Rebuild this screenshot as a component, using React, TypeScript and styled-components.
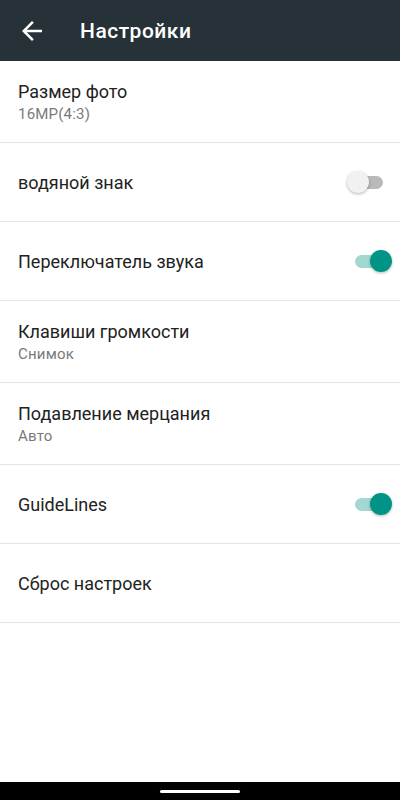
import React, { useState } from "react";
import styled, { createGlobalStyle } from "styled-components";

const GlobalStyle = createGlobalStyle`
  html, body { margin: 0; padding: 0; background: #ffffff; }
  body { font-family: Roboto, "Noto Sans", sans-serif; -webkit-font-smoothing: antialiased; }
  #root { height: 800px; }
  * { box-sizing: border-box; }
`;

const Screen = styled.div`
  width: 400px;
  height: 800px;
  display: flex;
  flex-direction: column;
  background: #ffffff;
`;

const AppBar = styled.header`
  height: 61px;
  flex: none;
  display: flex;
  align-items: center;
  background: #263238;
  padding-left: 17px;
`;

const BackButton = styled.button`
  width: 30px;
  height: 30px;
  padding: 0;
  border: none;
  background: transparent;
  display: flex;
  align-items: center;
  justify-content: center;
  margin-right: 33px;
  color: #ffffff;
`;

const Title = styled.h1`
  margin: 0;
  font-family: Roboto, sans-serif;
  font-weight: 500;
  font-size: 21px;
  color: #ffffff;
  letter-spacing: 0.5px;
`;

const List = styled.main`
  flex: 1;
  display: flex;
  flex-direction: column;
`;

const Row = styled.div<{ $two?: boolean }>`
  height: ${(p) => (p.$two ? 82 : 79)}px;
  border-bottom: 1px solid #e4e4e4;
  display: flex;
  align-items: center;
  padding: 0 8px 0 18px;
`;

const Texts = styled.div`
  flex: 1;
  display: flex;
  flex-direction: column;
  padding-top: 2px;
`;

const Label = styled.div`
  font-size: 18px;
  color: #222222;
  line-height: 22px;
`;

const Summary = styled.div`
  font-size: 15px;
  color: #7a7a7a;
  line-height: 20px;
  margin-top: 1px;
  letter-spacing: 0.2px;
`;

const SwitchRoot = styled.button`
  position: relative;
  width: 45px;
  height: 28px;
  padding: 0;
  border: none;
  background: transparent;
  cursor: pointer;
`;

const Track = styled.span<{ $on: boolean }>`
  position: absolute;
  left: 8px;
  width: 28px;
  top: 8px;
  height: 13px;
  border-radius: 7px;
  background: ${(p) => (p.$on ? "#a3d8d2" : "#b9b9b9")};
`;

const Thumb = styled.span<{ $on: boolean }>`
  position: absolute;
  top: 3px;
  left: ${(p) => (p.$on ? "23px" : "0px")};
  width: 22px;
  height: 22px;
  border-radius: 50%;
  background: ${(p) => (p.$on ? "#009486" : "#f1f1f1")};
  box-shadow: 0 1px 3px rgba(0, 0, 0, 0.3);
`;

const NavBar = styled.footer`
  height: 18px;
  flex: none;
  background: #000000;
  display: flex;
  align-items: center;
  justify-content: center;
`;

const HomeIndicator = styled.span`
  width: 80px;
  height: 3px;
  border-radius: 2px;
  background: #ffffff;
`;

const Toggle = ({ on, onClick }: { on: boolean; onClick: () => void }) => (
  <SwitchRoot onClick={onClick} aria-pressed={on}>
    <Track $on={on} />
    <Thumb $on={on} />
  </SwitchRoot>
);

type Item = { label: string; summary?: string; toggle?: boolean };

const items: Item[] = [
  { label: "Размер фото", summary: "16MP(4:3)" },
  { label: "водяной знак", toggle: false },
  { label: "Переключатель звука", toggle: true },
  { label: "Клавиши громкости", summary: "Снимок" },
  { label: "Подавление мерцания", summary: "Авто" },
  { label: "GuideLines", toggle: true },
  { label: "Сброс настроек" },
];

export default function App() {
  const [toggles, setToggles] = useState<Record<number, boolean>>(() => {
    const t: Record<number, boolean> = {};
    items.forEach((it, i) => {
      if (it.toggle !== undefined) t[i] = it.toggle;
    });
    return t;
  });

  return (
    <>
      <GlobalStyle />
      <Screen>
        <AppBar>
          <BackButton aria-label="Назад">
            <svg width="30" height="30" viewBox="0 0 24 24" fill="currentColor">
              <path d="M20 11H7.83l5.59-5.59L12 4l-8 8 8 8 1.41-1.41L7.83 13H20v-2z" />
            </svg>
          </BackButton>
          <Title>Настройки</Title>
        </AppBar>
        <List>
          {items.map((it, i) => (
            <Row key={i} $two={!!it.summary}>
              <Texts>
                <Label>{it.label}</Label>
                {it.summary && <Summary>{it.summary}</Summary>}
              </Texts>
              {it.toggle !== undefined && (
                <Toggle
                  on={toggles[i]}
                  onClick={() => setToggles((s) => ({ ...s, [i]: !s[i] }))}
                />
              )}
            </Row>
          ))}
        </List>
        <NavBar>
          <HomeIndicator />
        </NavBar>
      </Screen>
    </>
  );
}
